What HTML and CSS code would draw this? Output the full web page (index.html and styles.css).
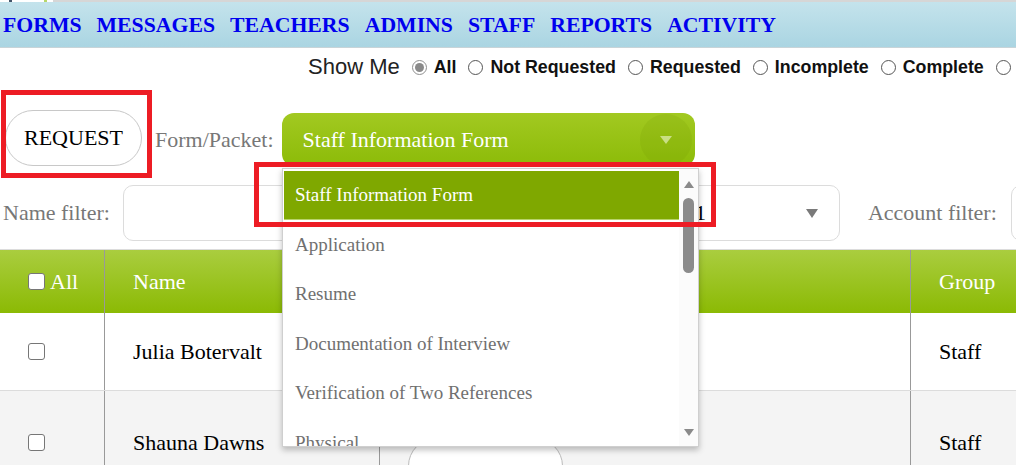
FILE: index.html
```html
<!DOCTYPE html>
<html>
<head>
<meta charset="utf-8">
<link rel="stylesheet" href="styles.css">
</head>
<body>
<div class="topstrip"><div class="logo-bit"><span class="frag dark"></span><span class="frag green"></span></div></div>
<nav class="navbar">
  <a>FORMS</a><a>MESSAGES</a><a>TEACHERS</a><a>ADMINS</a><a>STAFF</a><a>REPORTS</a><a>ACTIVITY</a>
</nav>
<div class="showme">
  <span class="showme-label">Show Me</span>
  <label class="opt"><span class="radio checked"></span>All</label>
  <label class="opt"><span class="radio"></span>Not Requested</label>
  <label class="opt"><span class="radio"></span>Requested</label>
  <label class="opt"><span class="radio"></span>Incomplete</label>
  <label class="opt"><span class="radio"></span>Complete</label>
  <label class="opt"><span class="radio"></span></label>
</div>
<div class="request-row">
  <button class="pill-btn">REQUEST</button>
  <span class="field-label form-label">Form/Packet:</span>
  <div class="green-select"><span>Staff Information Form</span><span class="gs-arrow"><span class="tri"></span></span></div>
</div>
<div class="filter-row">
  <span class="field-label name-label">Name filter:</span>
  <div class="name-box"><span class="nb-text">1</span><span class="tri-gray"></span></div>
  <span class="field-label acct-label">Account filter:</span>
  <div class="acct-box"></div>
</div>
<div class="table">
  <div class="thead">
    <div class="cell first"><span class="cb"></span><span class="all">All</span></div>
    <div class="cell">Name</div>
    <div class="cell"></div>
    <div class="cell">Group</div>
  </div>
  <div class="trow r1">
    <div class="cell first"><span class="cb"></span></div>
    <div class="cell">Julia Botervalt</div>
    <div class="cell"></div>
    <div class="cell">Staff</div>
  </div>
  <div class="trow r2">
    <div class="cell first"><span class="cb"></span></div>
    <div class="cell">Shauna Dawns</div>
    <div class="cell"><span class="row-pill"></span></div>
    <div class="cell">Staff</div>
  </div>
</div>

<div class="dropdown">
  <div class="dd-list">
    <div class="dd-opt sel">Staff Information Form</div>
    <div class="dd-opt">Application</div>
    <div class="dd-opt">Resume</div>
    <div class="dd-opt">Documentation of Interview</div>
    <div class="dd-opt">Verification of Two References</div>
    <div class="dd-opt">Physical</div>
  </div>
  <div class="dd-scroll">
    <span class="sb-up"></span>
    <span class="sb-thumb"></span>
    <span class="sb-down"></span>
  </div>
</div>

<div class="annot a1"></div>
<div class="annot a2"></div>
</body>
</html>
```

FILE: styles.css
```css
html, body {
  margin: 0;
  padding: 0;
}
body {
  font-family: "Liberation Serif", "Times New Roman", serif;
  background: #fff;
  width: 1016px;
  height: 465px;
  overflow: hidden;
  position: relative;
}

.topstrip {
  height: 2px;
  background: #d6d6d6;
  display: flex;
}
.logo-bit {
  width: 53px;
  background: #fff;
  display: flex;
}
.frag {
  height: 2px;
  width: 3px;
}
.frag.dark { background: #44556a; margin-left: 9px; }
.frag.green { background: #b6d76a; margin-left: 32px; }

.navbar {
  height: 43px;
  padding-top: 2px;
  border-bottom: 1px solid #c8d4d8;
  background: linear-gradient(#c4e3ec, #aad5e2);
  display: flex;
  align-items: center;
  padding-left: 3px;
  gap: 15px;
}
.navbar a {
  font-weight: bold;
  font-size: 21.75px;
  color: #0000ee;
  text-decoration: none;
}

.showme {
  height: 38px;
  display: flex;
  align-items: center;
  padding-left: 308px;
  white-space: nowrap;
  font-family: "Liberation Sans", Arial, sans-serif;
}
.showme-label {
  font-size: 22px;
  color: #222;
}
.opt {
  display: inline-flex;
  align-items: center;
  gap: 7px;
  margin-left: 12px;
  font-weight: bold;
  font-size: 17.8px;
  color: #111;
}
.radio {
  width: 15px;
  height: 15px;
  border: 1px solid #555;
  border-radius: 50%;
  box-sizing: border-box;
  flex: none;
  background: #fff;
  display: flex;
  align-items: center;
  justify-content: center;
}
.radio.checked {
  border-color: #8f8f8f;
}
.radio.checked::after {
  content: "";
  width: 9px;
  height: 9px;
  border-radius: 50%;
  background: #8a8a8a;
}

.request-row {
  display: flex;
  align-items: flex-start;
  margin-top: 24px;
}
.pill-btn {
  margin-left: 5px;
  width: 137px;
  height: 56px;
  border: 1px solid #c8c8c8;
  border-radius: 28px;
  background: #fff;
  font-family: inherit;
  font-size: 22px;
  color: #000;
  padding: 0;
}
.field-label {
  font-size: 22px;
  color: #777;
  white-space: nowrap;
}
.form-label {
  margin: 17px 8px 0 13px;
}
.green-select {
  margin-top: 3px;
  width: 413px;
  height: 53px;
  border-radius: 12px;
  background: linear-gradient(#a2c921, #8cbb08);
  display: flex;
  align-items: center;
  justify-content: space-between;
  padding-left: 21px;
  box-sizing: border-box;
  color: #fff;
  font-size: 22px;
}
.gs-arrow {
  width: 52px;
  height: 52px;
  border-radius: 50%;
  background: rgba(110, 150, 0, 0.16);
  margin-right: 3px;
  display: flex;
  align-items: center;
  justify-content: center;
}
.tri {
  width: 0;
  height: 0;
  border-left: 6px solid transparent;
  border-right: 6px solid transparent;
  border-top: 8px solid #c9df85;
}

.filter-row {
  display: flex;
  align-items: center;
  margin-top: 19px;
  height: 56px;
}
.name-label {
  margin-left: 3px;
  margin-right: 13px;
}
.name-box {
  width: 717px;
  height: 56px;
  flex: none;
  border: 1px solid #dcdcdc;
  border-radius: 10px;
  box-sizing: border-box;
  display: flex;
  align-items: center;
  justify-content: flex-end;
  padding-right: 21px;
}
.nb-text {
  font-size: 22px;
  color: #000;
  margin-right: 100px;
}
.tri-gray {
  width: 0;
  height: 0;
  border-left: 6px solid transparent;
  border-right: 6px solid transparent;
  border-top: 9px solid #7a7a7a;
}
.acct-label {
  margin-left: 28px;
  margin-right: 14px;
}
.acct-box {
  width: 200px;
  height: 56px;
  flex: none;
  border: 1px solid #dcdcdc;
  border-radius: 10px;
  box-sizing: border-box;
}

.table {
  margin-top: 8px;
  border-top: 1px solid #dcdcdc;
}
.thead, .trow {
  display: grid;
  grid-template-columns: 104px 275px 531px 106px;
  font-size: 22px;
}
.thead {
  height: 63px;
  background: linear-gradient(#aacd3f, #8bba04);
  color: #fff;
}
.trow {
  color: #000;
}
.trow.r1 {
  height: 78px;
  border-bottom: 1px solid #dcdcdc;
  box-sizing: border-box;
  background: #fff;
}
.trow.r2 {
  height: 98px;
  background: #f4f4f4;
}
.cell {
  display: flex;
  align-items: center;
  padding-left: 28px;
  box-sizing: border-box;
  white-space: nowrap;
}
.cell + .cell {
  border-left: 1px solid #999;
}
.cb {
  width: 17px;
  height: 17px;
  border: 1px solid #767676;
  border-radius: 3px;
  background: #fff;
  box-sizing: border-box;
  flex: none;
}
.all {
  margin-left: 5px;
}
.row-pill {
  align-self: flex-start;
  margin-top: 47px;
  width: 155px;
  height: 56px;
  border: 1px solid #bbb;
  border-radius: 28px;
  background: #fff;
  box-sizing: border-box;
}

.dropdown {
  position: absolute;
  left: 282px;
  top: 168px;
  width: 417px;
  height: 279px;
  border: 1px solid #cfcfcf;
  box-sizing: border-box;
  background: #fff;
  box-shadow: 0 3px 6px rgba(0, 0, 0, 0.25);
  display: flex;
  overflow: hidden;
  z-index: 5;
}
.dd-list {
  flex: 1;
  padding: 2px 0 0 1px;
  overflow: hidden;
}
.dd-opt {
  height: 49.5px;
  display: flex;
  align-items: center;
  padding-left: 11px;
  font-size: 19px;
  color: #707070;
  box-sizing: border-box;
  white-space: nowrap;
}
.dd-opt.sel {
  height: 49px;
  background: #7fa800;
  color: #fff;
  border-bottom: 1px solid #b9d36a;
}
.dd-scroll {
  width: 19px;
  flex: none;
  background: #fbfbfb;
  display: flex;
  flex-direction: column;
  align-items: center;
}
.sb-up {
  margin-top: 12px;
  width: 0;
  height: 0;
  border-left: 5.5px solid transparent;
  border-right: 5.5px solid transparent;
  border-bottom: 7px solid #8a8a8a;
}
.sb-thumb {
  margin-top: 10px;
  width: 11px;
  height: 75px;
  border-radius: 6px;
  background: #8b8b8b;
}
.sb-down {
  margin-top: auto;
  margin-bottom: 10px;
  width: 0;
  height: 0;
  border-left: 5.5px solid transparent;
  border-right: 5.5px solid transparent;
  border-top: 7px solid #8a8a8a;
}

.annot {
  position: absolute;
  border: 5px solid #ed1c24;
  box-sizing: border-box;
  z-index: 10;
}
.a1 {
  left: 1px;
  top: 90px;
  width: 151px;
  height: 88px;
}
.a2 {
  left: 254px;
  top: 162px;
  width: 462px;
  height: 65px;
}
```
